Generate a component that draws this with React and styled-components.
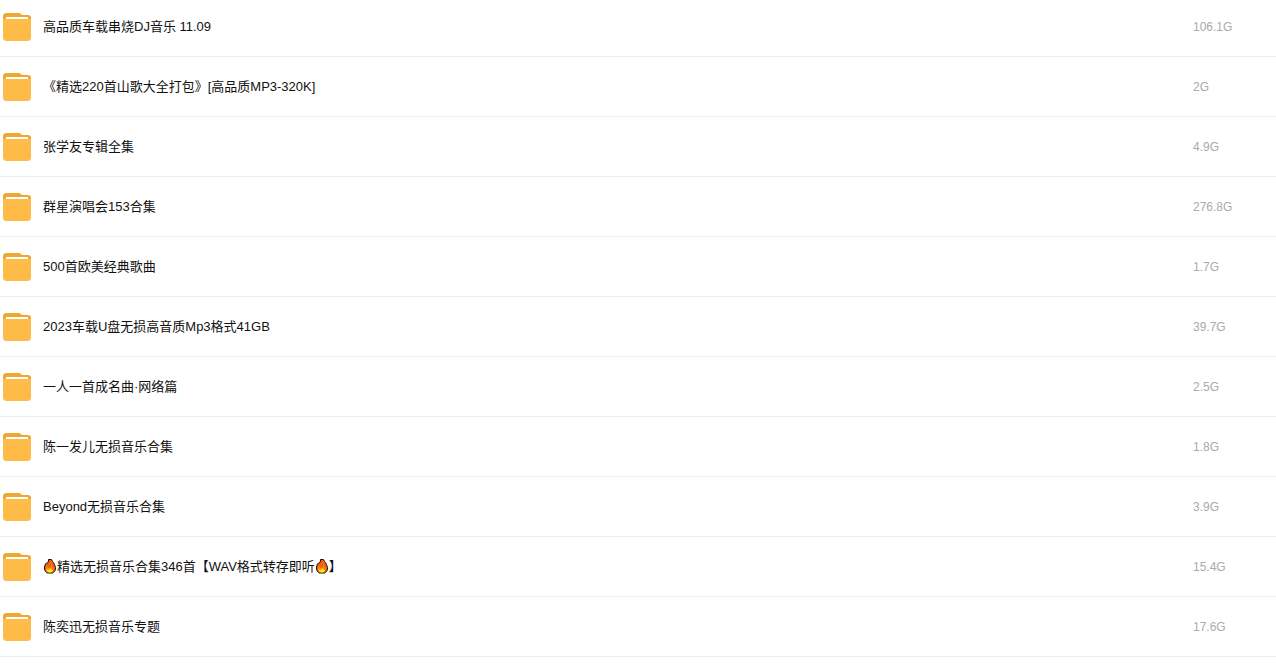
import React from 'react';
import styled, {createGlobalStyle} from 'styled-components';

const GlobalStyle = createGlobalStyle`
    body {
        margin: 0;
        background: #fff;
        font-family: "Liberation Sans", "Noto Sans CJK SC", sans-serif;
    }
`;

const FileList = styled.ul`
    margin: 0;
    padding: 0;
    list-style: none;
`;

const Row = styled.li`
    display: flex;
    align-items: center;
    padding: 16px 3px 15px;
    border-bottom: 1px solid #ededed;

    &:first-child {
        padding-top: 13px;
    }
`;

const Icon = styled.svg`
    flex: none;
    width: 28px;
    height: 28px;
    margin-right: 12px;
`;

const Name = styled.a`
    flex: 1;
    color: #111;
    font-size: 13px;
    line-height: 28px;
    white-space: nowrap;
    text-decoration: none;
`;

const Size = styled.span`
    flex: none;
    width: 80px;
    color: #aaa;
    font-size: 12px;
    line-height: 28px;
`;

const Flame = styled.svg`
    width: 14px;
    height: 16px;
    vertical-align: text-bottom;
`;

const FolderIcon = () => (
    <Icon viewBox="0 0 28 28" aria-hidden="true">
        <path fill="#f0a732" d="M3.500 0h12.500c1.500 0 2 2 4 2h5c2 0 3 1.200 3 3v7H0V3.500C0 1.200 1.200 0 3.500 0z" />
        <path fill="#ffbb48" d="M0 6h28v18.500c0 2.300-1.200 3.500-3.500 3.500h-21C1.200 28 0 26.800 0 24.500z" />
        <rect fill="#fff" x="3" y="4" width="22" height="2" />
    </Icon>
);

const Fire = () => (
    <Flame viewBox="0 0 14 16" role="img" aria-label="🔥">
        <path fill="#f7630c" stroke="#111" d="M5.500 1.500h3l1 2 1 1 1 2 1 3v2l-1 2-2 1.500h-5l-2-1.500-1-2.500v-2l1-3 1-1 1 0 1-2z" />
        <path fill="#ff8a1f" d="M3 10l1-2 1 2h2l2-2 1 2v2l-1 2H5l-2-1z" />
        <path fill="#fff100" d="M4 11l1 1 1 0 1-2 1 2 2 0v1l-2 1.500H5.500L4 13z" />
    </Flame>
);

const files = [
    {name: '高品质车载串烧DJ音乐 11.09', size: '106.1G'},
    {name: '《精选220首山歌大全打包》[高品质MP3-320K]', size: '2G'},
    {name: '张学友专辑全集', size: '4.9G'},
    {name: '群星演唱会153合集', size: '276.8G'},
    {name: '500首欧美经典歌曲', size: '1.7G'},
    {name: '2023车载U盘无损高音质Mp3格式41GB', size: '39.7G'},
    {name: '一人一首成名曲·网络篇', size: '2.5G'},
    {name: '陈一发儿无损音乐合集', size: '1.8G'},
    {name: 'Beyond无损音乐合集', size: '3.9G'},
    {name: <><Fire />精选无损音乐合集346首【WAV格式转存即听<Fire />】</>, size: '15.4G'},
    {name: '陈奕迅无损音乐专题', size: '17.6G'},
];

const App = () => (
    <>
        <GlobalStyle />
        <FileList lang="zh-CN">
            {files.map((file) => (
                <Row key={file.size}>
                    <FolderIcon />
                    <Name href="#">{file.name}</Name>
                    <Size>{file.size}</Size>
                </Row>
            ))}
        </FileList>
    </>
);

export default App;
